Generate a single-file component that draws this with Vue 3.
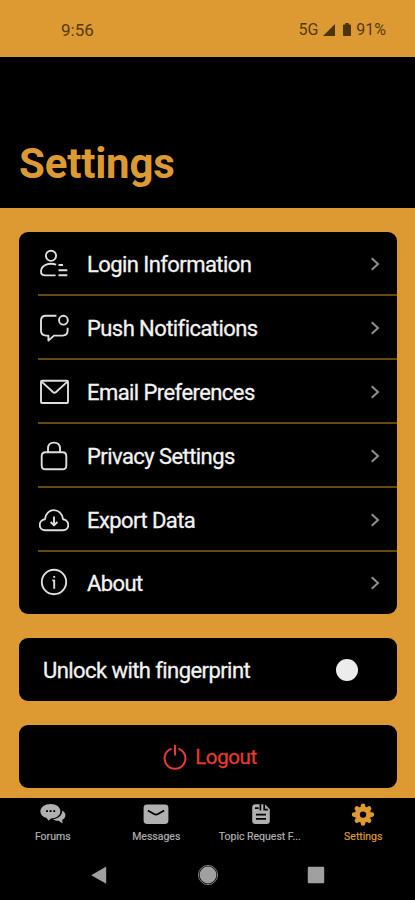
<template>
  <div class="screen">
    <div class="status-bar">
      <span class="clock">9:56</span>
      <div class="status-right">
        <span class="network">5G</span>
        <svg class="signal" viewBox="0 0 12 12"><path d="M12 0V12H0Z" /></svg>
        <svg class="battery" viewBox="0 0 8 13"><path d="M2.3 0H5.7V1.5H7Q8 1.5 8 2.5V12Q8 13 7 13H1Q0 13 0 12V2.5Q0 1.5 1 1.5H2.3Z" /></svg>
        <span class="percent">91%</span>
      </div>
    </div>

    <header class="header">
      <h1>Settings</h1>
    </header>

    <main class="content">
      <ul class="card menu">
        <li v-for="item in items" :key="item.label" class="menu-item">
          <svg class="menu-icon" viewBox="0 0 30 30">
            <path v-for="d in item.paths" :key="d" :d="d" />
            <circle v-for="c in item.circles" :key="c.cx" :cx="c.cx" :cy="c.cy" :r="c.r" />
          </svg>
          <span class="menu-label">{{ item.label }}</span>
          <svg class="chevron" viewBox="0 0 10 14"><path d="M1.7 1.2L8 7L1.7 12.8" /></svg>
        </li>
      </ul>

      <div class="card fingerprint">
        <span class="fingerprint-label">Unlock with fingerprint</span>
        <button
          class="toggle"
          :class="{ on: fingerprint }"
          aria-label="Unlock with fingerprint"
          @click="fingerprint = !fingerprint"
        >
          <span class="knob" />
        </button>
      </div>

      <button class="card logout">
        <svg class="power" viewBox="0 0 24 26">
          <path d="M8.6 4.6A10.4 10.4 0 1 0 15.4 4.6M12 1V11.6" />
        </svg>
        <span class="logout-label">Logout</span>
      </button>
    </main>

    <nav class="tabs">
      <a v-for="tab in tabs" :key="tab.label" class="tab" :class="{ active: tab.active }">
        <svg class="tab-icon" viewBox="0 0 26 24">
          <path class="fill" fill-rule="evenodd" :d="tab.fill" />
          <path v-if="tab.teeth" class="teeth" :d="tab.teeth" />
          <path v-if="tab.cut" class="cut" :d="tab.cut" />
        </svg>
        <span class="tab-label">{{ tab.label }}</span>
      </a>
    </nav>

    <div class="system-nav">
      <svg viewBox="0 0 22 22"><path d="M18.2 2.6V19.8L3.2 11.2Z" /></svg>
      <svg viewBox="0 0 22 22">
        <circle cx="11" cy="11" r="9.6" class="ring" />
        <circle cx="11" cy="11" r="8.4" />
      </svg>
      <svg viewBox="0 0 22 22"><rect x="2.8" y="2.8" width="16.4" height="16.4" rx="1" /></svg>
    </div>
  </div>
</template>

<script setup>
import { ref } from 'vue'

const fingerprint = ref(false)

const items = [
  {
    label: 'Login Information',
    paths: [
      'M17.2 15.6C14 14.6 9.5 14.6 6.6 15.8C3.6 17.2 2 20 2 22.6C2 25.2 3.6 26.4 6 26.4H16.6',
      'M19.5 16H24M19.5 21.2H28.3M19.5 26.2H28.3',
    ],
    circles: [{ cx: 12, cy: 6.8, r: 5.1 }],
  },
  {
    label: 'Push Notifications',
    paths: ['M17.4 2.8H7Q2 2.8 2 7.8V17.6Q2 22.6 7 22.6H9.4V27.6L15 22.6H23.6Q28.6 22.6 28.6 17.6V14.8'],
    circles: [{ cx: 24.4, cy: 7.2, r: 4.4 }],
  },
  {
    label: 'Email Preferences',
    paths: ['M3 3.8H28Q29 3.8 29 4.8V25Q29 26 28 26H3Q2 26 2 25V4.8Q2 3.8 3 3.8Z', 'M2.6 4.6L13.9 15Q15.5 16.3 17.1 15L28.4 4.6'],
  },
  {
    label: 'Privacy Settings',
    paths: [
      'M6.5 11.2H23.5Q27.3 11.2 27.3 15V24.4Q27.3 28.2 23.5 28.2H6.5Q2.7 28.2 2.7 24.4V15Q2.7 11.2 6.5 11.2Z',
      'M9 11V7.6Q9 1.6 15 1.6Q21 1.6 21 7.6V11',
    ],
  },
  {
    label: 'Export Data',
    paths: [
      'M6.4 25.2C-1.2 25.2-1 15 6 14.2C7.2 2 22.6 2.2 24 14.2C31 15 31.2 25.2 23.8 25.2Z',
      'M15 11.5V20.2M11.6 17L15 20.4L18.4 17',
    ],
  },
  {
    label: 'About',
    paths: ['M13.2 12.4H15.2V20.8', 'M15.2 8V9.8'],
    circles: [{ cx: 15, cy: 14, r: 12.2 }],
  },
]

const tabs = [
  {
    label: 'Forums',
    fill: 'M10.6 2C16.4 2 20.4 5.2 20.4 9.2C20.4 13.4 16.2 16.4 10.8 16.4L8.6 18.8L6.6 16C2.8 15 .4 12.4 .4 9.2C.4 5.2 4.8 2 10.6 2ZM22.2 8.4C24.8 9.8 26 12 25.2 14.4C24.8 15.8 23.8 17 22.2 17.8L22.6 21.4L18.6 18.8C16.4 18.8 14.4 18.2 13 17.2C18.2 16.4 22.4 13.2 22.2 8.4Z',
    cut: 'M6 9.2H8M9.6 9.2H11.6M13.2 9.2H15.2',
  },
  {
    label: 'Messages',
    fill: 'M4 2.6H22Q25.4 2.6 25.4 6V18.6Q25.4 22 22 22H4Q.6 22 .6 18.6V6Q.6 2.6 4 2.6Z',
    cut: 'M4.8 8.4L11 12Q13 13.2 15 12L21.2 8.4',
  },
  {
    label: 'Topic Request F...',
    fill: 'M8.5 2.2H18L22.8 7.2V18.8Q22.8 22 19.6 22H8.4Q5.2 22 5.2 18.8V5.4Q5.2 2.2 8.5 2.2Z',
    cut: 'M8 6.2H11.6M13.4 2V8.4M17.2 2V7.6H20.8M9 12.6H19M9 16.8H19',
  },
  {
    label: 'Settings',
    active: true,
    fill: 'M13 4.4A8.2 8.2 0 1 0 13 20.8A8.2 8.2 0 1 0 13 4.4ZM13 9.4A3.2 3.2 0 1 1 13 15.8A3.2 3.2 0 1 1 13 9.4Z',
    teeth: 'M13 6.6V3.7M13 18.6V21.5M7 12.6H4.1M19 12.6H21.9M8.8 8.4L6.9 6.5M17.2 8.4L19.1 6.5M8.8 16.8L6.9 18.7M17.2 16.8L19.1 18.7',
  },
]
</script>

<style>
body {
  margin: 0;
  background: #000;
}
</style>

<style scoped>
.screen {
  display: flex;
  flex-direction: column;
  width: 415px;
  height: 900px;
  overflow: hidden;
  background: #dd9a33;
  color: #f2f2f2;
  font-family: Roboto, "Liberation Sans", sans-serif;
}

button {
  border: 0;
  padding: 0;
  font: inherit;
}

.status-bar {
  display: flex;
  align-items: center;
  justify-content: space-between;
  box-sizing: border-box;
  height: 56.5px;
  padding: 3px 29px 0 61px;
  color: #553a12;
  font-size: 16px;
  flex-shrink: 0;
}

.clock {
  font-size: 17px;
}

.status-right {
  display: flex;
  align-items: center;
}

.status-right svg {
  fill: #4c3410;
}

.signal {
  width: 12px;
  height: 12px;
  margin-left: 5px;
}

.battery {
  width: 8px;
  height: 13px;
  margin: 0 5px 0 8px;
}

.header {
  display: flex;
  align-items: flex-end;
  box-sizing: border-box;
  height: 151.5px;
  padding: 0 19px 19px;
  background: #000;
  flex-shrink: 0;
}

h1 {
  margin: 0;
  color: #dd9a33;
  font-size: 42px;
  line-height: 50px;
  font-weight: 700;
  letter-spacing: -0.2px;
}

.content {
  display: flex;
  flex-direction: column;
  gap: 24px;
  box-sizing: border-box;
  height: 590px;
  padding: 24px 18px 0 19px;
  flex-shrink: 0;
}

.card {
  box-sizing: border-box;
  margin: 0;
  border-radius: 9px;
  background: #000;
}

.menu {
  display: grid;
  grid-template-rows: repeat(5, 64px) 1fr;
  height: 382px;
  padding: 0 0 0 18.5px;
  list-style: none;
}

.menu-item {
  display: flex;
  align-items: center;
  padding: 1px 17px 0 1.5px;
  border-bottom: 2px solid #674716;
}

.menu-item:last-child {
  border-bottom-color: transparent;
}

.menu-icon {
  width: 30px;
  height: 30px;
  fill: none;
  stroke: #dedede;
  stroke-width: 1.9;
  stroke-linejoin: round;
}

.menu-label,
.fingerprint-label,
.logout-label {
  font-size: 22px;
  line-height: 26px;
  letter-spacing: -0.57px;
  -webkit-text-stroke: 0.3px currentColor;
}

.menu-label {
  flex: 1;
  padding: 2px 0 0 18px;
}

.chevron {
  width: 10px;
  height: 14px;
  fill: none;
  stroke: #8f8f8f;
  stroke-width: 2;
}

.fingerprint {
  display: flex;
  align-items: center;
  justify-content: space-between;
  height: 63px;
  padding: 0 39px 0 24px;
}

.fingerprint-label {
  padding-top: 3px;
}

.toggle {
  display: flex;
  width: 44px;
  justify-content: flex-end;
  background: transparent;
}

.toggle.on {
  justify-content: flex-start;
}

.knob {
  width: 22px;
  height: 22px;
  border-radius: 50%;
  background: #ececec;
}

.logout {
  display: flex;
  align-items: center;
  justify-content: center;
  gap: 8px;
  height: 63px;
  padding: 1px 0 0 4px;
  color: #e53b30;
}

.logout-label {
  font-size: 20.5px;
  letter-spacing: -0.4px;
}

.power {
  width: 24px;
  height: 26px;
  fill: none;
  stroke: #e53b30;
  stroke-width: 2;
}

.tabs {
  display: grid;
  grid-template-columns: repeat(4, 1fr);
  height: 52px;
  padding-left: 1px;
  box-sizing: border-box;
  background: #000;
  flex-shrink: 0;
}

.tab {
  display: flex;
  flex-direction: column;
  align-items: center;
  padding-top: 4px;
  color: #b0b0b0;
}

.tab.active {
  color: #dd9a33;
}

.tab-icon {
  width: 26px;
  height: 24px;
}

.fill {
  fill: currentColor;
}

.teeth {
  fill: none;
  stroke: currentColor;
  stroke-width: 4.6;
  stroke-linecap: round;
}

.cut {
  fill: none;
  stroke: #000;
  stroke-width: 1.7;
}

.tab-label {
  margin-top: 4px;
  font-size: 10.5px;
  line-height: 14px;
  white-space: nowrap;
  -webkit-text-stroke: 0.2px currentColor;
}

.system-nav {
  display: flex;
  align-items: center;
  justify-content: space-between;
  box-sizing: border-box;
  flex: 1;
  padding: 0 88px;
  background: #000;
}

.system-nav svg {
  width: 22px;
  height: 22px;
  fill: #a0a0a0;
}

.system-nav .ring {
  fill: none;
  stroke: #808080;
  stroke-width: 1;
}
</style>
